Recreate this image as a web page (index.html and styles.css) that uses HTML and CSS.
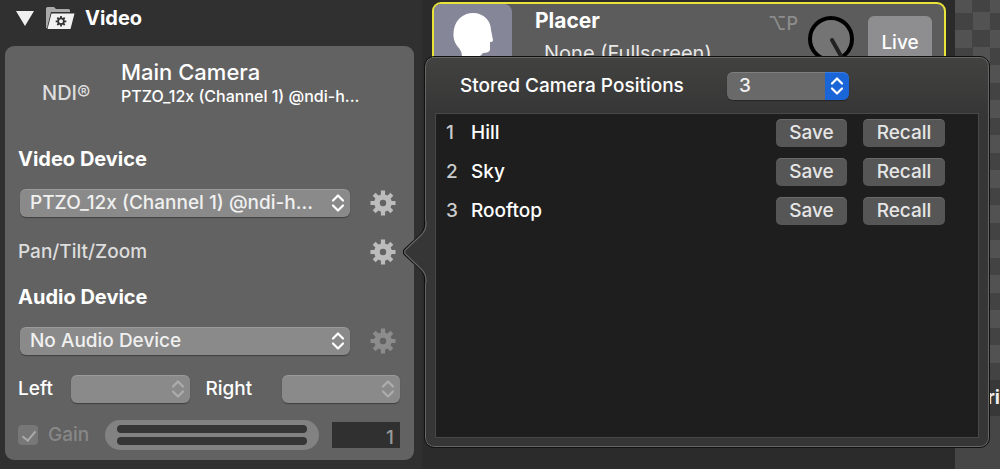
FILE: index.html
```html
<!DOCTYPE html>
<html lang="en">
<head>
    <meta charset="UTF-8">
    <meta name="viewport" content="width=device-width, initial-scale=1.0">
    <title>Video Sources</title>
    <link rel="stylesheet" href="styles.css">
</head>
<body>
    <!-- shared icons -->
    <svg class="defs" width="0" height="0" aria-hidden="true">
        <symbol id="gear" viewBox="0 0 26 26">
            <g fill="currentColor">
                <path fill-rule="evenodd" d="M13 4.200a8.800 8.800 0 1 0 0 17.600a8.800 8.800 0 1 0 0-17.600zM13 9.800a3.200 3.200 0 1 1 0 6.400a3.200 3.200 0 1 1 0-6.400z"/>
                <path id="teeth" d="M10.900 .5h4.200v6h-4.200zM10.900 19.500h4.200v6h-4.200z"/>
                <use href="#teeth" transform="rotate(45 13 13)"/>
                <use href="#teeth" transform="rotate(90 13 13)"/>
                <use href="#teeth" transform="rotate(135 13 13)"/>
            </g>
        </symbol>
        <symbol id="updown" viewBox="0 0 14 20">
            <path d="M2 7.500L7 2.500L12 7.500M2 12.500L7 17.500L12 12.500" fill="none" stroke="currentColor" stroke-width="2.200" stroke-linecap="round" stroke-linejoin="round"/>
        </symbol>
    </svg>

    <div class="app">
        <aside class="sidebar">
            <div class="section-bar">
                <svg class="triangle" viewBox="0 0 18 15"><path d="M0 0h18L9 15z" fill="#f0f0f0"/></svg>
                <svg class="folder" viewBox="0 0 29 22">
                    <path d="M0 21V1.500Q0 0 1.500 0H8l2 2h12.500Q24 2 24 3.500V5H5L1 21z" fill="#aaa"/>
                    <path d="M5.500 6.500H28.500L24.500 22H1.500z" fill="#f2f2f2"/>
                    <g stroke="#333" fill="none">
                        <circle cx="15" cy="14.300" r="2.900" stroke-width="1.800"/>
                        <path d="M15 9v2M15 17.600v2M9.700 14.300h2M18.300 14.300h2M11.300 10.600l1.400 1.400M17.300 16.600l1.400 1.400M18.700 10.600l-1.400 1.400M12.700 16.600l-1.400 1.400" stroke-width="1.800"/>
                    </g>
                </svg>
                <h1>Video</h1>
            </div>

            <section class="card">
                <div class="source">
                    <span class="badge">NDI®</span>
                    <div>
                        <h2>Main Camera</h2>
                        <p>PTZO_12x (Channel 1) @ndi-h...</p>
                    </div>
                </div>

                <label class="heading" for="videoDevice">Video Device</label>
                <div class="row device">
                    <div class="select">
                        <select id="videoDevice"><option>PTZO_12x (Channel 1) @ndi-h...</option></select>
                        <svg><use href="#updown"/></svg>
                    </div>
                    <button class="gear" aria-label="Video device settings"><svg><use href="#gear"/></svg></button>
                </div>
                <div class="row ptz">
                    <span>Pan/Tilt/Zoom</span>
                    <button class="gear" aria-label="Pan/Tilt/Zoom settings"><svg><use href="#gear"/></svg></button>
                </div>

                <label class="heading" for="audioDevice">Audio Device</label>
                <div class="row device">
                    <div class="select">
                        <select id="audioDevice"><option>No Audio Device</option></select>
                        <svg><use href="#updown"/></svg>
                    </div>
                    <button class="gear" aria-label="Audio device settings" disabled><svg><use href="#gear"/></svg></button>
                </div>

                <div class="row channels">
                    <label for="left">Left</label>
                    <div class="select off">
                        <select id="left" disabled><option></option></select>
                        <svg><use href="#updown"/></svg>
                    </div>
                    <label for="right">Right</label>
                    <div class="select off">
                        <select id="right" disabled><option></option></select>
                        <svg><use href="#updown"/></svg>
                    </div>
                </div>

                <div class="row gain">
                    <label class="check"><input type="checkbox" checked disabled>Gain</label>
                    <div class="meter"><i></i><i></i></div>
                    <input class="value" type="text" value="1" aria-label="Gain value" disabled>
                </div>
            </section>
        </aside>

        <main class="layers">
            <section class="layer">
                <div class="thumb">
                    <svg viewBox="0 0 76 64"><path d="M28 64V53Q28 47 24 43C19 37 19 31 20 25C22 15 30 9 39 9C50 9 57 17 57 26L59 36Q59 38 56 38L56 46Q55 49 49 49L46 52V64z" fill="#fff"/></svg>
                </div>
                <div class="info">
                    <h2>Placer</h2>
                    <p>None (Fullscreen)</p>
                </div>
                <kbd>⌥P</kbd>
                <svg class="knob" viewBox="0 0 48 48">
                    <circle cx="24" cy="24" r="21" fill="#747474" stroke="#000" stroke-width="4"/>
                    <path d="M25 25L34 41" stroke="#222" stroke-width="4" stroke-linecap="round"/>
                </svg>
                <button class="live">Live</button>
            </section>
        </main>

        <div class="preview"><div class="caption">ri</div></div>

        <div class="popover">
            <svg class="arrow" viewBox="0 0 26 62">
                <path d="M26 0H23V3Q23 10 17 15L2 28Q-1 31 2 34L17 47Q23 52 23 59V62H26z" fill="#363636"/>
                <path d="M22 0V3Q22 10 16 15L2 28Q-1 31 2 34L16 47Q22 52 22 59V62" fill="none" stroke="#111" stroke-width="1.500"/>
                <path d="M23 0V3Q23 10 17 15L3 28.500Q0 31 3 33.500L17 47Q23 52 23 59V62" fill="none" stroke="#666" stroke-width="1.200"/>
            </svg>
            <div class="popover-head">
                <label for="count">Stored Camera Positions</label>
                <div class="select blue">
                    <select id="count"><option>3</option></select>
                    <svg><use href="#updown"/></svg>
                </div>
            </div>
            <ol class="positions">
                <li><span class="num">1</span><span class="name">Hill</span><button>Save</button><button>Recall</button></li>
                <li><span class="num">2</span><span class="name">Sky</span><button>Save</button><button>Recall</button></li>
                <li><span class="num">3</span><span class="name">Rooftop</span><button>Save</button><button>Recall</button></li>
            </ol>
        </div>
    </div>
</body>
</html>
```

FILE: styles.css
```css
* {
    box-sizing: border-box;
}

body {
    margin: 0;
    background-color: #2b2b2b;
    color: #fff;
    font-family: Inter, "Liberation Sans", sans-serif;
    font-size: 19px;
    font-weight: 500;
    line-height: 28px;
}

h1, h2, p, ol {
    margin: 0;
    padding: 0;
}

button, input, select {
    margin: 0;
    padding: 0;
    border: none;
    color: inherit;
    font: inherit;
}

svg {
    display: block;
}

.defs {
    position: absolute;
}

.app {
    position: relative;
    display: grid;
    grid-template-columns: 422px 1fr 45px;
    min-height: 100vh;
    overflow: hidden;
}

/* sidebar */
.sidebar {
    padding: 0 8px 9px 5px;
    background-color: #303030;
}

.section-bar {
    display: flex;
    align-items: center;
    height: 36px;
    margin-bottom: 10px;
    padding-left: 11px;
}

.triangle {
    width: 18px;
    height: 15px;
    margin-right: 12px;
}

.folder {
    width: 29px;
    height: 22px;
    margin-right: 10px;
}

.section-bar h1 {
    font-size: 20px;
    font-weight: 700;
}

.card {
    padding: 13px 14px 10px 13px;
    border-radius: 9px;
    background-color: #626262;
}

.source {
    display: grid;
    grid-template-columns: 103px 1fr;
    align-items: center;
    height: 48px;
    margin-bottom: 38px;
}

.badge {
    align-self: end;
    padding-left: 24px;
    color: #ddd;
    font-size: 20px;
}

.source h2 {
    font-size: 22px;
    font-weight: 500;
    line-height: 26px;
}

.source p {
    font-size: 16px;
    line-height: 22px;
}

.heading {
    display: block;
    margin-bottom: 16px;
    font-size: 20px;
    font-weight: 700;
}

.row {
    display: flex;
    align-items: center;
}

.device {
    padding-left: 2px;
}

.device .select {
    flex: 1;
    margin-right: 20px;
}

.select {
    position: relative;
    height: 28px;
    border-radius: 6px;
    background-color: #8a8a8a;
    box-shadow: 0 1px 1px rgba(0, 0, 0, 0.35), inset 0 1px 0 rgba(255, 255, 255, 0.15);
}

.select select {
    display: block;
    width: 100%;
    height: 28px;
    padding: 0 28px 0 10px;
    background: none;
    color: #f0f0f0;
    appearance: none;
}

.select svg {
    position: absolute;
    top: 4px;
    right: 5px;
    width: 14px;
    height: 20px;
    pointer-events: none;
}

.gear {
    width: 26px;
    height: 26px;
    margin-right: 4px;
    background: none;
    color: #bcbcbc;
}

.gear svg {
    width: 26px;
    height: 26px;
}

.gear:disabled {
    color: #8c8c8c;
}

.ptz {
    justify-content: space-between;
    height: 28px;
    margin: 21px 0 17px;
    color: #ddd;
}

.channels {
    margin-top: 20px;
}

.channels label {
    width: 53px;
}

.channels .select {
    flex: 1;
}

.channels .select + label {
    width: 76px;
    margin-left: 16px;
}

.off svg {
    color: #acacac;
}

.gain {
    height: 30px;
    margin-top: 17px;
}

.check {
    display: flex;
    align-items: center;
    width: 87px;
    color: #888;
}

.check input {
    position: relative;
    width: 20px;
    height: 20px;
    margin-right: 10px;
    border-radius: 4px;
    background-color: #777;
    appearance: none;
}

.check input::after {
    content: "";
    position: absolute;
    top: 3px;
    left: 7px;
    width: 6px;
    height: 11px;
    border: solid #aaa;
    border-width: 0 2px 2px 0;
    transform: rotate(40deg);
}

.meter {
    display: flex;
    flex: 1;
    flex-direction: column;
    justify-content: center;
    gap: 4px;
    height: 30px;
    padding: 0 12px;
    border-radius: 15px;
    background-color: #828282;
}

.meter i {
    height: 8px;
    border-radius: 4px;
    background-color: #363636;
}

.value {
    width: 68px;
    height: 26px;
    margin-left: 13px;
    padding: 6px 6px 0 0;
    background-color: #303030;
    color: #999;
    text-align: right;
}

/* layer list */
.layers {
    padding: 2px 9px 0 10px;
}

.layer {
    display: flex;
    height: 90px;
    border: 2px solid #e9e33a;
    border-radius: 9px;
    background-color: #5c5c5c;
    overflow: hidden;
}

.thumb {
    width: 78px;
    border-radius: 0 8px 8px 0;
    background-color: #858799;
}

.thumb svg {
    width: 76px;
    height: 64px;
}

.info {
    flex: 1;
    padding: 3px 0 0 23px;
}

.info h2 {
    font-size: 21px;
    font-weight: 700;
}

.info p {
    margin-top: 4px;
    padding-left: 9px;
    color: #e8e8e8;
    font-size: 20px;
    font-weight: 400;
}

.layer kbd {
    margin: 6px 9px 0 0;
    color: #8d8d8d;
    font-family: Inter, "DejaVu Sans", sans-serif;
    font-size: 18px;
}

.knob {
    width: 48px;
    height: 48px;
    margin: 11px 13px 0 0;
}

.live {
    width: 64px;
    height: 64px;
    margin: 12px 12px 0 0;
    padding-bottom: 10px;
    border-radius: 6px;
    background-color: #8e8e90;
}

/* preview */
.preview {
    padding-top: 380px;
    background: conic-gradient(#434343 25%, #525252 0 50%, #434343 0 75%, #525252 0) 0 -5px / 35px 35px;
    overflow: hidden;
}

.caption {
    height: 100%;
    padding-top: 4px;
    background: linear-gradient(#383838 36px, #464646 36px);
    color: #eee;
    font-weight: 700;
    text-align: right;
}

/* camera positions popover */
.popover {
    position: absolute;
    top: 57px;
    left: 425px;
    right: 11px;
    padding: 0 9px 8px;
    border: 1px solid #666;
    border-radius: 9px;
    outline: 1px solid #111;
    background: linear-gradient(#424241, #363636 56px);
}

.arrow {
    position: absolute;
    top: 163px;
    left: -23px;
    width: 26px;
    height: 62px;
}

.popover-head {
    display: flex;
    align-items: center;
    height: 55px;
    padding-left: 25px;
}

.popover-head label {
    width: 267px;
}

.blue {
    width: 122px;
    background: linear-gradient(90deg, #696969 98px, #1a66d8 98px);
    overflow: hidden;
}

.blue select {
    padding-left: 12px;
}

.positions {
    min-height: 325px;
    padding-top: 5px;
    border: 1px solid #484848;
    background-color: #1e1e1e;
    list-style: none;
}

.positions li {
    display: flex;
    align-items: center;
    height: 28px;
    margin-bottom: 11px;
    padding: 0 33px 0 10px;
}

.num {
    width: 25px;
    color: #ccc;
}

.name {
    flex: 1;
}

.positions button {
    width: 71px;
    height: 28px;
    border-radius: 5px;
    background-color: #565656;
    box-shadow: inset 0 1px 0 rgba(255, 255, 255, 0.12);
    color: #e6e6e6;
}

.positions button + button {
    width: 82px;
    margin-left: 16px;
}
```
